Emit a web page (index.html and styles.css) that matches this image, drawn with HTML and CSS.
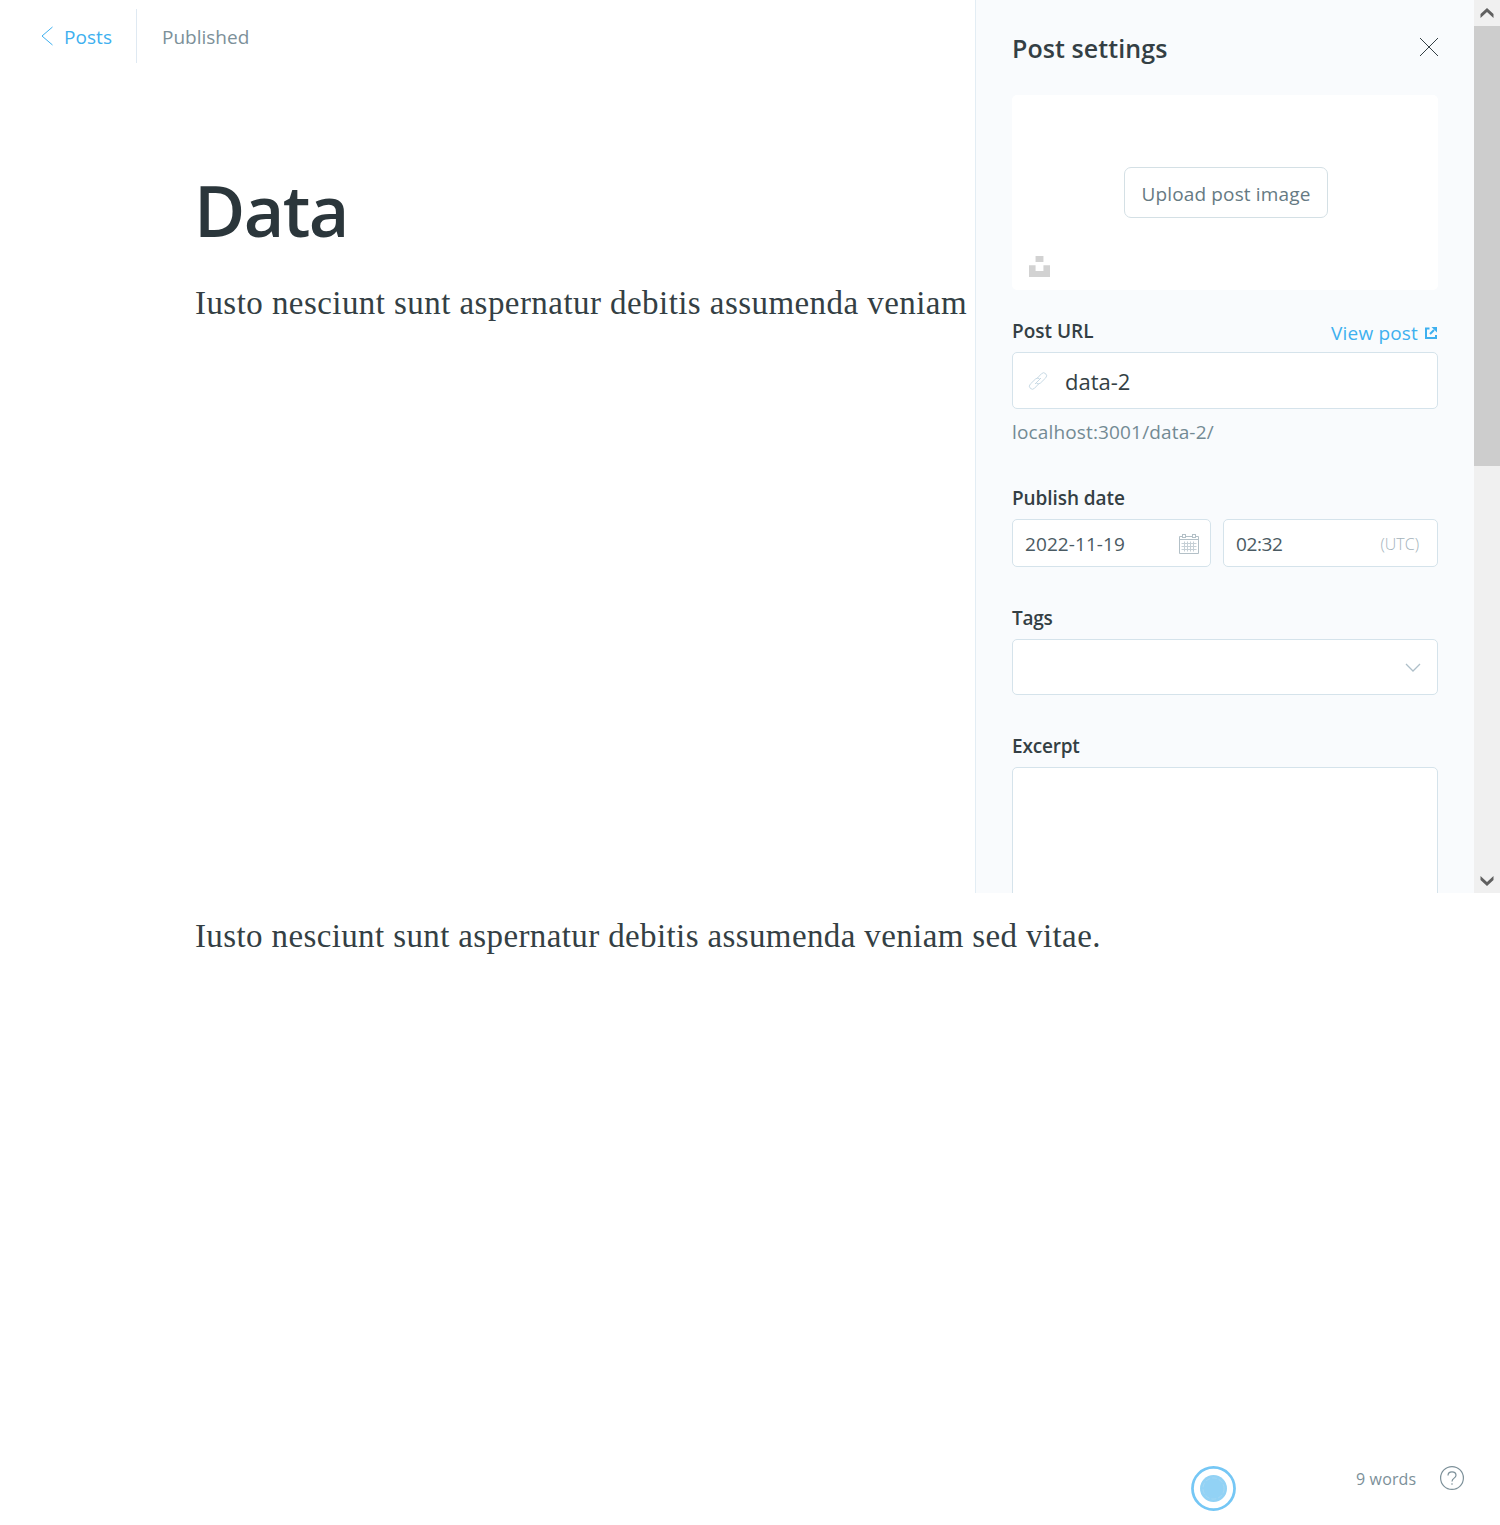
FILE: index.html
```html
<!DOCTYPE html>
<html lang="en">
<head>
<meta charset="utf-8">
<title>Data - Post editor</title>
<link rel="stylesheet" href="styles.css">
</head>
<body>
<div class="screen">
  <main class="editor">
    <header class="toolbar">
      <a class="back"><svg class="icon-back" viewBox="0 0 14 20"><path d="M12.5 1 2 10l10.500 9"/></svg><span>Posts</span></a>
      <span class="status">Published</span>
    </header>
    <h1 class="title">Data</h1>
    <p class="body-text clipped">Iusto nesciunt sunt aspernatur debitis assumenda veniam</p>
  </main>
  <aside class="settings">
    <header class="settings-header">
      <h2>Post settings</h2>
      <svg class="icon-close" viewBox="0 0 20 20"><path d="m1 1 18 18M19 1 1 19"/></svg>
    </header>
    <div class="uploader">
      <button class="upload-btn">Upload post image</button>
      <svg class="icon-unsplash" viewBox="0 0 32 32"><path d="M10 9V0h12v9H10zm12 5h10v18H0V14h10v9h12v-9z"/></svg>
    </div>
    <div class="label-row url-row">
      <label>Post URL</label>
      <a class="view-post"><span>View post</span><svg class="icon-external" viewBox="0 0 12 12"><path d="M4.500 1.500H1V11h10V8"/><path d="M5 7 9 3"/><path class="head" d="M6.500 0H12v5.500z"/></svg></a>
    </div>
    <div class="input url-input">
      <svg class="icon-link" viewBox="0 0 20 20"><path d="m8.500 8 5-5.300a3 3 0 0 1 4.200 0 3 3 0 0 1 0 4.200L12.500 12a3 3 0 0 1-4.200 0"/><path d="m11.500 12-5 5.300a3 3 0 0 1-4.200 0 3 3 0 0 1 0-4.200L7.500 8a3 3 0 0 1 4.200 0"/><path d="m7 13 6-6"/></svg>
      <span>data-2</span>
    </div>
    <p class="hint">localhost:3001/data-2/</p>
    <div class="label-row date-row"><label>Publish date</label></div>
    <div class="date-fields">
      <div class="input small"><span class="date">2022-11-19</span>
        <svg class="icon-calendar" viewBox="0 0 20 20"><path d="M3.500 2.500h-3v17h19v-17h-3M6.500 2.500h7M.5 5.500h19"/><path class="grid" d="M2.500 9.500h15M2.500 12.500h15M2.500 15.500h15M5.500 7.500v10M8.500 7.500v10M11.500 7.500v10M14.500 7.500v10"/><rect x="3.500" y=".5" width="3" height="3"/><rect x="13.500" y=".5" width="3" height="3"/></svg>
      </div>
      <div class="input small"><span class="time">02:32</span><span class="utc">(UTC)</span></div>
    </div>
    <div class="label-row tags-row"><label>Tags</label></div>
    <div class="input tags-input"><svg class="icon-chevron" viewBox="0 0 16 10"><path d="m1 1 7 7 7-7"/></svg></div>
    <div class="label-row excerpt-row"><label>Excerpt</label></div>
    <div class="input excerpt-input"></div>
  </aside>
  <div class="scrollbar">
    <svg class="icon-arrow" viewBox="0 0 14 10"><path d="M7 0 13.500 6v4L7 4 .5 10V6z"/></svg>
    <div class="thumb"></div>
    <svg class="icon-arrow down" viewBox="0 0 14 10"><path d="M7 10 .5 4V0L7 6l6.500-6v4z"/></svg>
  </div>
</div>
<section class="continuation">
  <p class="body-text">Iusto nesciunt sunt aspernatur debitis assumenda veniam sed vitae.</p>
</section>
<footer class="footer">
  <svg class="icon-beacon" viewBox="0 0 46 46"><circle class="ring" cx="23" cy="23" r="21.500"/><circle class="dot" cx="23" cy="23" r="13.800"/><circle class="dash" cx="23" cy="23" r="10.800"/></svg>
  <span class="words">9 words</span>
  <svg class="icon-help" viewBox="0 0 24 24"><circle cx="12" cy="12" r="11.400"/><path d="M8 9.500C8 7 9.700 5.800 12 5.800s4 1.300 4 3.500c0 3-4 2.700-4 6.200"/><path d="M12 17.300v1.400"/></svg>
</footer>
</body>
</html>
```
FILE: styles.css
```css
* { box-sizing: border-box; }
body { margin: 0; width: 1500px; height: 1525px; overflow: hidden; background: #fff; color: #343f44; font-family: "Open Sans", "Noto Sans", sans-serif; font-size: 19px; line-height: 1.4; letter-spacing: .15px; }
h1, h2, p { margin: 0; font-weight: 600; white-space: nowrap; }
svg { display: block; flex: none; fill: none; stroke: currentColor; }
span { white-space: nowrap; }
.screen { display: grid; grid-template-columns: 975px 499px 26px; height: 893px; overflow: hidden; }
.toolbar { display: flex; align-items: center; height: 54px; margin-top: 9px; color: #7c9099; }
.back { display: flex; align-items: center; gap: 10px; height: 54px; width: 137px; padding-left: 40px; border-right: 1px solid #dfe9f2; letter-spacing: .05px; color: #3eb0ef; }
.back span, .status { padding-top: 2px; }
.icon-back { width: 14px; height: 20px; }
.status { margin-left: 25px; letter-spacing: 0; }
.title { margin: 98px 0 0 194px; font-size: 70px; line-height: 98px; letter-spacing: -1.6px; color: #2b363b; }
.body-text { margin: 20px 0 0 195px; font-family: Georgia, "Liberation Serif", serif; font-size: 33px; font-weight: 400; line-height: 48px; letter-spacing: .38px; color: #343f44; }
.clipped { letter-spacing: .44px; }
.settings { padding: 0 36px; border-left: 1px solid #e3edf4; background: #f9fbfd; overflow: hidden; }
.settings-header { display: flex; justify-content: space-between; padding-top: 30px; height: 95px; }
h2 { font-size: 25px; line-height: 36px; letter-spacing: .08px; }
.icon-close { width: 20px; height: 20px; margin: 7px -1px 0 0; }
.uploader { display: grid; place-items: center; position: relative; height: 195px; padding-left: 2px; border-radius: 5px; background: #fff; }
.upload-btn { width: 204px; height: 51px; border: 1px solid #d4e0e5; border-radius: 7px; padding: 3px 0 0; background: #fff; color: #667a83; font: inherit; letter-spacing: .15px; }
.icon-unsplash { position: absolute; left: 17px; bottom: 13px; width: 21px; height: 21px; fill: #d2d2d2; stroke: none; }
.label-row { display: flex; justify-content: space-between; height: 27px; line-height: 27px; font-weight: 600; letter-spacing: -.08px; }
.url-row { margin-top: 28px; margin-bottom: 7px; letter-spacing: 0; }
.view-post { display: flex; align-items: center; gap: 7px; padding: 4px 1px 0 0; font-weight: 400; letter-spacing: .18px; color: #3eb0ef; }
.icon-external { width: 12px; height: 12px; margin-top: -2px; stroke-width: 2; }
.head { fill: currentColor; stroke: none; }
.input { display: flex; align-items: center; border: 1px solid #d5e3eb; border-radius: 5px; background: #fff; }
.url-input { height: 57px; padding-left: 15px; gap: 17px; font-size: 22px; letter-spacing: 0; }
.url-input span { padding-top: 2px; }
.icon-link { width: 20px; height: 20px; color: #c8dae5; stroke-width: 1; }
.hint { margin-top: 10px; line-height: 27px; font-weight: 400; color: #738a94; }
.date-row { margin: 39px 0 7px; }
.date-fields { display: grid; grid-template-columns: 199px 215px; gap: 12px; }
.small { justify-content: space-between; height: 48px; padding: 0 12px; color: #4a5a62; }
.date, .time, .utc { padding-top: 2px; }
.date { letter-spacing: .08px; }
.time { letter-spacing: -.4px; }
.icon-calendar { width: 20px; height: 20px; margin-top: 1px; margin-right: -1px; color: #b3c0c7; }
.grid { stroke: #c6d0d6; }
.utc { padding-right: 6px; font-size: 16px; font-weight: 300; letter-spacing: 0; color: #a4b3bb; }
.tags-row { margin: 38px 0 7px; letter-spacing: -.3px; }
.tags-input { justify-content: flex-end; height: 56px; padding: 1px 16px 0 0; }
.icon-chevron { width: 16px; height: 10px; stroke-width: 1.300; color: #aebfc9; }
.excerpt-row { margin: 38px 0 7px; letter-spacing: -.2px; }
.excerpt-input { height: 160px; }
.scrollbar { display: flex; flex-direction: column; align-items: center; background: #f0f0f0; }
.icon-arrow { width: 14px; height: 10px; margin: 8px 0; fill: #606060; stroke: none; }
.thumb { width: 26px; height: 440px; background: #cdcdcd; }
.down { margin-top: auto; margin-bottom: 7px; }
.continuation { height: 573px; padding-top: 1px; }
.continuation .body-text { margin-top: 18px; }
.footer { display: flex; padding-left: 1191px; height: 59px; color: #7c9099; font-size: 16px; }
.icon-beacon { width: 45px; height: 45px; }
.ring { stroke: #75c7f5; stroke-width: 2.800; fill: #fff; }
.dot { fill: #92d2f5; stroke: none; }
.dash { stroke: #a9d9f2; stroke-width: .8; stroke-dasharray: 5 2; }
.words { width: 60px; margin-left: 120px; line-height: 26px; }
.icon-help { width: 24px; height: 24px; margin-left: 24px; stroke-width: 1.200; }
```
